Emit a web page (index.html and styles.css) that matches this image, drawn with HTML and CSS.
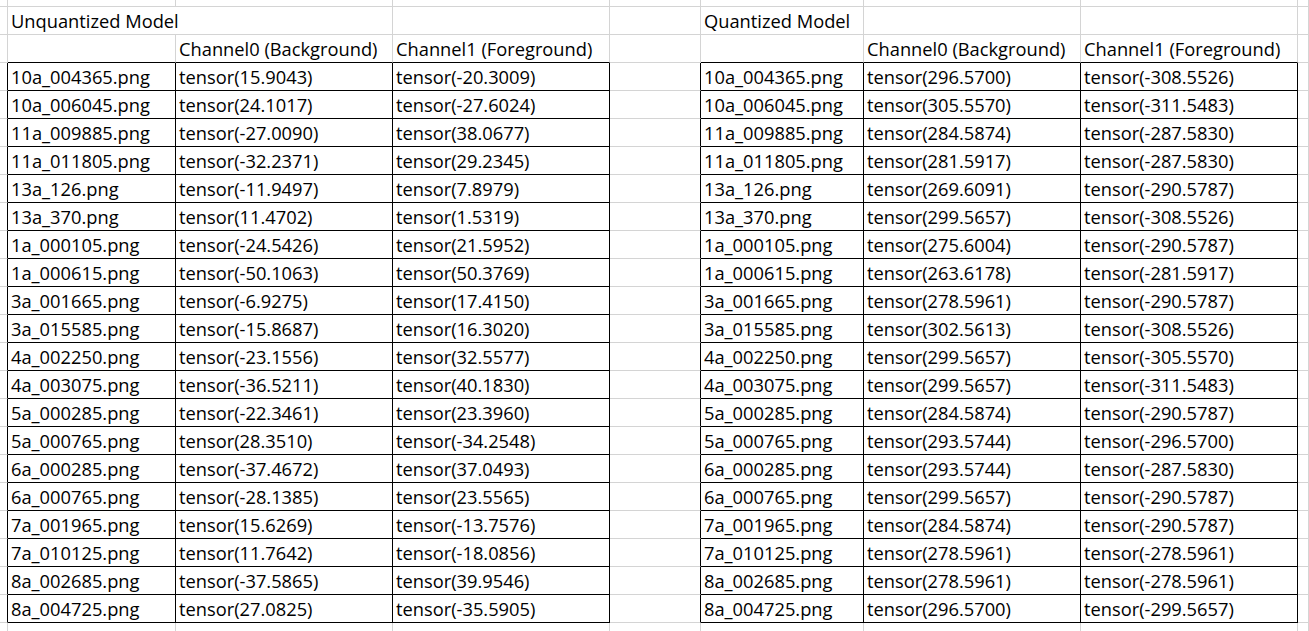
FILE: index.html
```html
<!DOCTYPE html>
<html>
<head>
<meta charset="utf-8">
<link rel="stylesheet" href="styles.css">
</head>
<body>
<div class="sheet">
  <div class="c top"></div><div class="c top"></div><div class="c top"></div><div class="c top"></div><div class="c top"></div><div class="c top"></div><div class="c top"></div><div class="c top"></div><div class="c top"></div>

  <div class="c"></div><div class="c span2">Unquantized Model</div><div class="c"></div><div class="c"></div><div class="c">Quantized Model</div><div class="c"></div><div class="c"></div><div class="c"></div>

  <div class="c"></div><div class="c bb"></div><div class="c bb">Channel0 (Background)</div><div class="c bb">Channel1 (Foreground)</div><div class="c"></div><div class="c bb"></div><div class="c bb">Channel0 (Background)</div><div class="c bb">Channel1 (Foreground)</div><div class="c"></div>

  <div class="c br"></div><div class="c d">10a_004365.png</div><div class="c d">tensor(15.9043)</div><div class="c d">tensor(-20.3009)</div><div class="c br"></div><div class="c d">10a_004365.png</div><div class="c d">tensor(296.5700)</div><div class="c d">tensor(-308.5526)</div><div class="c"></div>
  <div class="c br"></div><div class="c d">10a_006045.png</div><div class="c d">tensor(24.1017)</div><div class="c d">tensor(-27.6024)</div><div class="c br"></div><div class="c d">10a_006045.png</div><div class="c d">tensor(305.5570)</div><div class="c d">tensor(-311.5483)</div><div class="c"></div>
  <div class="c br"></div><div class="c d">11a_009885.png</div><div class="c d">tensor(-27.0090)</div><div class="c d">tensor(38.0677)</div><div class="c br"></div><div class="c d">11a_009885.png</div><div class="c d">tensor(284.5874)</div><div class="c d">tensor(-287.5830)</div><div class="c"></div>
  <div class="c br"></div><div class="c d">11a_011805.png</div><div class="c d">tensor(-32.2371)</div><div class="c d">tensor(29.2345)</div><div class="c br"></div><div class="c d">11a_011805.png</div><div class="c d">tensor(281.5917)</div><div class="c d">tensor(-287.5830)</div><div class="c"></div>
  <div class="c br"></div><div class="c d">13a_126.png</div><div class="c d">tensor(-11.9497)</div><div class="c d">tensor(7.8979)</div><div class="c br"></div><div class="c d">13a_126.png</div><div class="c d">tensor(269.6091)</div><div class="c d">tensor(-290.5787)</div><div class="c"></div>
  <div class="c br"></div><div class="c d">13a_370.png</div><div class="c d">tensor(11.4702)</div><div class="c d">tensor(1.5319)</div><div class="c br"></div><div class="c d">13a_370.png</div><div class="c d">tensor(299.5657)</div><div class="c d">tensor(-308.5526)</div><div class="c"></div>
  <div class="c br"></div><div class="c d">1a_000105.png</div><div class="c d">tensor(-24.5426)</div><div class="c d">tensor(21.5952)</div><div class="c br"></div><div class="c d">1a_000105.png</div><div class="c d">tensor(275.6004)</div><div class="c d">tensor(-290.5787)</div><div class="c"></div>
  <div class="c br"></div><div class="c d">1a_000615.png</div><div class="c d">tensor(-50.1063)</div><div class="c d">tensor(50.3769)</div><div class="c br"></div><div class="c d">1a_000615.png</div><div class="c d">tensor(263.6178)</div><div class="c d">tensor(-281.5917)</div><div class="c"></div>
  <div class="c br"></div><div class="c d">3a_001665.png</div><div class="c d">tensor(-6.9275)</div><div class="c d">tensor(17.4150)</div><div class="c br"></div><div class="c d">3a_001665.png</div><div class="c d">tensor(278.5961)</div><div class="c d">tensor(-290.5787)</div><div class="c"></div>
  <div class="c br"></div><div class="c d">3a_015585.png</div><div class="c d">tensor(-15.8687)</div><div class="c d">tensor(16.3020)</div><div class="c br"></div><div class="c d">3a_015585.png</div><div class="c d">tensor(302.5613)</div><div class="c d">tensor(-308.5526)</div><div class="c"></div>
  <div class="c br"></div><div class="c d">4a_002250.png</div><div class="c d">tensor(-23.1556)</div><div class="c d">tensor(32.5577)</div><div class="c br"></div><div class="c d">4a_002250.png</div><div class="c d">tensor(299.5657)</div><div class="c d">tensor(-305.5570)</div><div class="c"></div>
  <div class="c br"></div><div class="c d">4a_003075.png</div><div class="c d">tensor(-36.5211)</div><div class="c d">tensor(40.1830)</div><div class="c br"></div><div class="c d">4a_003075.png</div><div class="c d">tensor(299.5657)</div><div class="c d">tensor(-311.5483)</div><div class="c"></div>
  <div class="c br"></div><div class="c d">5a_000285.png</div><div class="c d">tensor(-22.3461)</div><div class="c d">tensor(23.3960)</div><div class="c br"></div><div class="c d">5a_000285.png</div><div class="c d">tensor(284.5874)</div><div class="c d">tensor(-290.5787)</div><div class="c"></div>
  <div class="c br"></div><div class="c d">5a_000765.png</div><div class="c d">tensor(28.3510)</div><div class="c d">tensor(-34.2548)</div><div class="c br"></div><div class="c d">5a_000765.png</div><div class="c d">tensor(293.5744)</div><div class="c d">tensor(-296.5700)</div><div class="c"></div>
  <div class="c br"></div><div class="c d">6a_000285.png</div><div class="c d">tensor(-37.4672)</div><div class="c d">tensor(37.0493)</div><div class="c br"></div><div class="c d">6a_000285.png</div><div class="c d">tensor(293.5744)</div><div class="c d">tensor(-287.5830)</div><div class="c"></div>
  <div class="c br"></div><div class="c d">6a_000765.png</div><div class="c d">tensor(-28.1385)</div><div class="c d">tensor(23.5565)</div><div class="c br"></div><div class="c d">6a_000765.png</div><div class="c d">tensor(299.5657)</div><div class="c d">tensor(-290.5787)</div><div class="c"></div>
  <div class="c br"></div><div class="c d">7a_001965.png</div><div class="c d">tensor(15.6269)</div><div class="c d">tensor(-13.7576)</div><div class="c br"></div><div class="c d">7a_001965.png</div><div class="c d">tensor(284.5874)</div><div class="c d">tensor(-290.5787)</div><div class="c"></div>
  <div class="c br"></div><div class="c d">7a_010125.png</div><div class="c d">tensor(11.7642)</div><div class="c d">tensor(-18.0856)</div><div class="c br"></div><div class="c d">7a_010125.png</div><div class="c d">tensor(278.5961)</div><div class="c d">tensor(-278.5961)</div><div class="c"></div>
  <div class="c br"></div><div class="c d">8a_002685.png</div><div class="c d">tensor(-37.5865)</div><div class="c d">tensor(39.9546)</div><div class="c br"></div><div class="c d">8a_002685.png</div><div class="c d">tensor(278.5961)</div><div class="c d">tensor(-278.5961)</div><div class="c"></div>
  <div class="c br"></div><div class="c d">8a_004725.png</div><div class="c d">tensor(27.0825)</div><div class="c d">tensor(-35.5905)</div><div class="c br"></div><div class="c d">8a_004725.png</div><div class="c d">tensor(296.5700)</div><div class="c d">tensor(-299.5657)</div><div class="c"></div>

  <div class="c"></div><div class="c"></div><div class="c"></div><div class="c"></div><div class="c"></div><div class="c"></div><div class="c"></div><div class="c"></div><div class="c"></div>
</div>
</body>
</html>
```

FILE: styles.css
```css
html, body {
  margin: 0;
  padding: 0;
  background: #ffffff;
  overflow: hidden;
}

.sheet {
  display: grid;
  grid-template-columns: 8px 168px 217px 217px 91px 163px 217px 217px 1fr;
  grid-template-rows: 7px;
  grid-auto-rows: 28px;
  width: 1309px;
  height: 631px;
  font-family: "Open Sans", "Liberation Sans", sans-serif;
  font-size: 18.3px;
  color: #000000;
}

.c {
  box-sizing: border-box;
  border-right: 1px solid #d4d4d4;
  border-bottom: 1px solid #d4d4d4;
  padding: 0 3px 3px 3px;
  display: flex;
  align-items: flex-end;
  white-space: nowrap;
  line-height: 20px;
  overflow: visible;
}

.span2 {
  grid-column: span 2;
}

.d {
  border-right-color: #000000;
  border-bottom-color: #000000;
}

.br {
  border-right-color: #000000;
}

.bb {
  border-bottom-color: #000000;
}
```
